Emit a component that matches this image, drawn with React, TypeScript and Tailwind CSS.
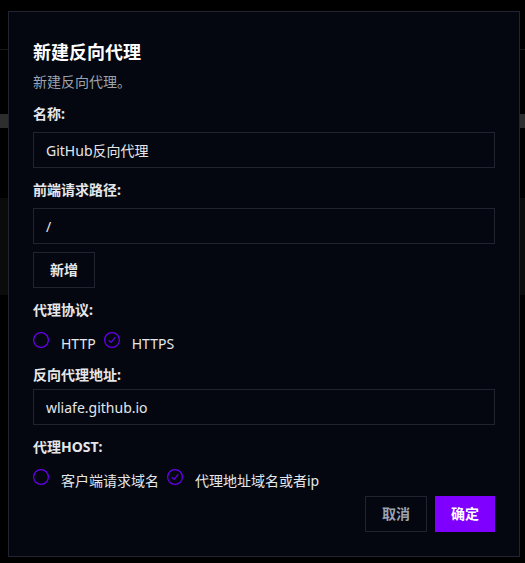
import { useState } from "react";

function RadioDot({ checked }: { checked: boolean }) {
  return (
    <svg width="16" height="16" viewBox="0 0 16 16" className="shrink-0">
      <circle cx="8" cy="8" r="7.4" fill="none" stroke="#6a00f5" strokeWidth="1.2" />
      {checked && (
        <path d="M4.8 8.2 7.1 10.4 11.3 5.4" fill="none" stroke="#6a00f5" strokeWidth="1.2" />
      )}
    </svg>
  );
}

function RadioGroup({
  options,
  value,
  onChange,
}: {
  options: string[];
  value: string;
  onChange: (v: string) => void;
}) {
  return (
    <div className="flex items-start gap-2">
      {options.map((o) => (
        <button key={o} type="button" onClick={() => onChange(o)} className="flex items-start gap-3">
          <RadioDot checked={value === o} />
          <span className="pt-0.5 text-sm leading-5 text-[#e5e7eb]">{o}</span>
        </button>
      ))}
    </div>
  );
}

function Field({ value, onChange }: { value: string; onChange: (v: string) => void }) {
  return (
    <input
      type="text"
      value={value}
      onChange={(e) => onChange(e.target.value)}
      className="h-9 w-full border border-[#1f2430] bg-[#04070f] px-3 text-sm text-[#e5e7eb] outline-none"
    />
  );
}

export default function App() {
  const [name, setName] = useState("GitHub反向代理");
  const [path, setPath] = useState("/");
  const [target, setTarget] = useState("wliafe.github.io");
  const [protocol, setProtocol] = useState("HTTPS");
  const [host, setHost] = useState("代理地址域名或者ip");

  return (
    <div
      className="relative h-[563px] w-[525px] overflow-hidden bg-black"
      style={{ fontFamily: '"Noto Sans", "Noto Sans CJK SC", sans-serif' }}
    >
      {/* page behind the overlay */}
      <div className="h-[50px] border-b border-[#161616]" />
      <div className="mt-[64px] h-[14px] bg-[#2e2e2e]" />
      <div className="mt-[70px] h-[97px] bg-[#0b0b0b]" />

      <div className="absolute left-[8px] top-[11px] flex h-[546px] w-[512px] flex-col border border-[#1f2430] bg-[#04070f] px-6 pb-6 pt-[26px]">
        <h2 className="text-lg font-bold leading-7 text-white">新建反向代理</h2>
        <p className="mt-1.5 text-sm leading-5 text-[#9ca3af]">新建反向代理。</p>

        <label className="mt-3 text-sm font-bold leading-5 text-[#e5e7eb]">名称:</label>
        <div className="mt-2">
          <Field value={name} onChange={setName} />
        </div>

        <label className="mt-3 text-sm font-bold leading-5 text-[#e5e7eb]">前端请求路径:</label>
        <div className="mt-2">
          <Field value={path} onChange={setPath} />
        </div>
        <div className="mt-2">
          <button type="button" className="h-9 w-[62px] border border-[#1f2430] text-sm font-bold text-[#e5e7eb]">
            新增
          </button>
        </div>

        <label className="mt-3 text-sm font-bold leading-5 text-[#e5e7eb]">代理协议:</label>
        <div className="mt-3">
          <RadioGroup options={["HTTP", "HTTPS"]} value={protocol} onChange={setProtocol} />
        </div>

        <label className="mt-[11px] text-sm font-bold leading-5 text-[#e5e7eb]">反向代理地址:</label>
        <div className="mt-1">
          <Field value={target} onChange={setTarget} />
        </div>

        <label className="mt-3 text-sm font-bold leading-5 text-[#e5e7eb]">代理HOST:</label>
        <div className="mt-3">
          <RadioGroup options={["客户端请求域名", "代理地址域名或者ip"]} value={host} onChange={setHost} />
        </div>

        <div className="mt-auto flex justify-end gap-2">
          <button type="button" className="h-9 w-[62px] border border-[#1f2430] text-sm font-bold text-[#9ca3af]">
            取消
          </button>
          <button type="button" className="h-9 w-[60px] bg-[#7f00ff] text-sm font-bold text-white">
            确定
          </button>
        </div>
      </div>
    </div>
  );
}
